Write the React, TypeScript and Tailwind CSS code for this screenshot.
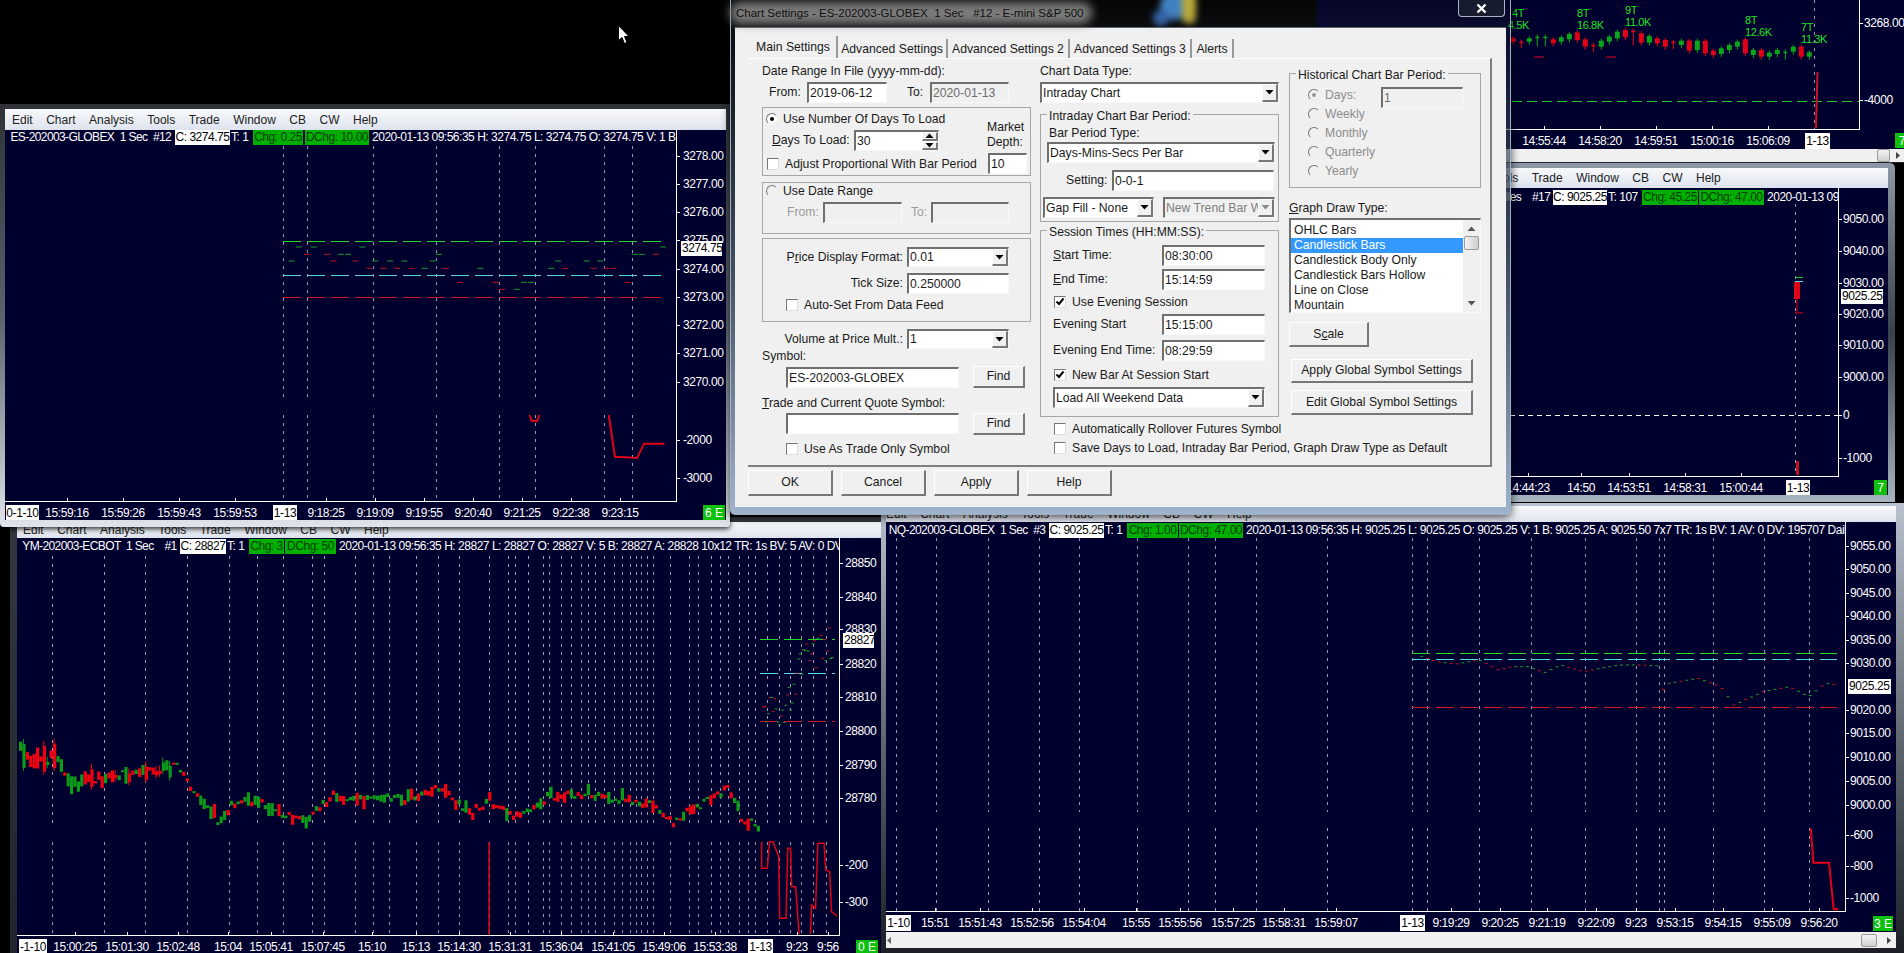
import React from "react";

const RED = "#e00018";
const CYAN = "#55d8e8";
const LINEG = "#22d822";
const LINER = "#d01828";
const DASH = "#9a9aae";

function rng(seed: number) {
  let s = seed;
  return () => {
    s = (s * 1664525 + 1013904223) % 4294967296;
    return s / 4294967296;
  };
}

function interp(pts: number[][], x: number) {
  for (let i = 0; i < pts.length - 1; i++) {
    if (x >= pts[i][0] && x <= pts[i + 1][0]) {
      const t = (x - pts[i][0]) / (pts[i + 1][0] - pts[i][0] || 1);
      return pts[i][1] + (pts[i + 1][1] - pts[i][1]) * t;
    }
  }
  return pts[pts.length - 1][1];
}

/* ---------- svg chart helpers ---------- */
function T({ x, y, fill = "#fff", anchor = "start", size = 12, children }: { x: number; y: number; fill?: string; anchor?: "start" | "middle"; size?: number; children: React.ReactNode }) {
  return (
    <text x={x} y={y + 4} fill={fill} textAnchor={anchor} fontSize={size} letterSpacing={-0.4}>
      {children}
    </text>
  );
}

function Axis({ left, top, right, bottom, prices, times, boxes, labelX, priceBox }: { left: number; top: number; right: number; bottom: number; prices: [string, number][]; times: [string, number][]; boxes: [string, number, number][]; labelX: number; priceBox?: [string, number, number] }) {
  return (
    <g>
      <line x1={right + 0.5} y1={top} x2={right + 0.5} y2={bottom + 1} stroke="#fff" />
      <line x1={left} y1={bottom + 0.5} x2={right + 1} y2={bottom + 0.5} stroke="#fff" />
      {prices.map(([p, y]) => (
        <g key={p}>
          <line x1={right} y1={y + 0.5} x2={right + 4} y2={y + 0.5} stroke="#fff" />
          <T x={labelX} y={y}>{p}</T>
        </g>
      ))}
      {priceBox && (
        <g>
          <rect x={labelX - 2} y={priceBox[1] - 7} width={priceBox[2]} height={15} fill="#fff" />
          <T x={labelX - 1} y={priceBox[1]} fill="#000">{priceBox[0]}</T>
        </g>
      )}
      {times.map(([t, x]) => (
        <g key={t + x}>
          <line x1={x + 0.5} y1={bottom - 3} x2={x + 0.5} y2={bottom} stroke="#fff" />
          <T x={x} y={bottom + 12} anchor="middle">{t}</T>
        </g>
      ))}
      {boxes.map(([t, x1, x2]) => (
        <g key={t}>
          <rect x={x1} y={bottom + 4} width={x2 - x1} height={16} fill="#fff" />
          <T x={(x1 + x2) / 2} y={bottom + 12} anchor="middle" fill="#000">{t}</T>
        </g>
      ))}
    </g>
  );
}

function VDash({ xs, y1, y2, gap }: { xs: number[]; y1: number; y2: number; gap?: [number, number] }) {
  return (
    <g stroke={DASH} strokeDasharray="3 5">
      {xs.map((x) => (
        <g key={x}>
          <line x1={x + 0.5} x2={x + 0.5} y1={y1} y2={gap ? gap[0] : y2} />
          {gap && <line x1={x + 0.5} x2={x + 0.5} y1={gap[1]} y2={y2} />}
        </g>
      ))}
    </g>
  );
}

function HLines({ x1, x2, lines }: { x1: number; x2: number; lines: [number, string][] }) {
  return (
    <g strokeDasharray="18 6">
      {lines.map(([y, c]) => (
        <line key={y} x1={x1} x2={x2} y1={y + 0.5} y2={y + 0.5} stroke={c} />
      ))}
    </g>
  );
}

function Chart({ x, y, w, h, children }: { x: number; y: number; w: number; h: number; children: React.ReactNode }) {
  return (
    <svg className="absolute inset-0" width={w} height={h} viewBox={`${x} ${y} ${w} ${h}`}>
      {children}
    </svg>
  );
}

/* ---------- window chrome ---------- */
const MENU = ["Edit", "Chart", "Analysis", "Tools", "Trade", "Window", "CB", "CW", "Help"];

function Menu({ cls }: { cls: string }) {
  return (
    <div className={`flex items-center gap-[13.5px] overflow-hidden bg-linear-to-b from-[#f8f9fb] to-[#dde3ee] text-[12px] text-[#222] whitespace-nowrap ${cls}`}>
      {MENU.map((m) => (
        <span key={m}>{m}</span>
      ))}
    </div>
  );
}

function Header({ cls, first, firstW, firstCls = "", c, cW, t, tW, chg, chgW, dchg, dchgW, gapCls, rest, w }: { cls: string; first: string; firstW: string; firstCls?: string; c: string; cW: string; t: string; tW: string; chg: string; chgW: string; dchg: string; dchgW: string; gapCls: string; rest: string; w: string }) {
  return (
    <div className={`absolute left-0 flex h-[15px] items-center overflow-hidden whitespace-pre text-[12px] leading-[15px] tracking-[-0.48px] text-white ${w} ${cls}`}>
      <span className={`shrink-0 overflow-hidden tracking-[-0.6px] ${firstW} ${firstCls}`}>{first}</span>
      <span className={`shrink-0 bg-white text-center text-black ${cW}`}>{c}</span>
      <span className={`shrink-0 pl-[1px] ${tW}`}>{t}</span>
      <span className={`shrink-0 bg-[#00b000] text-center text-[#053d05] ${chgW}`}>{chg}</span>
      <span className={`shrink-0 ${gapCls}`} />
      <span className={`shrink-0 bg-[#00b000] text-center text-[#053d05] ${dchgW}`}>{dchg}</span>
      <span className="shrink-0 pl-[3px]">{rest}</span>
    </div>
  );
}

function Badge({ cls, children }: { cls: string; children: React.ReactNode }) {
  return <div className={`absolute flex items-center justify-center bg-[#0cc00c] text-[12px] text-white ${cls}`}>{children}</div>;
}

function HScroll({ cls, thumb, arrowCls, leftArrow }: { cls: string; thumb: string; arrowCls: string; leftArrow?: boolean }) {
  return (
    <div className={`flex items-center bg-[#f0f0f0] ${cls}`}>
      {leftArrow && (
        <svg width="6" height="9" viewBox="0 0 6 9">
          <path d="M5 1 L1 4.5 L5 8 Z" fill="#666" />
        </svg>
      )}
      <div className="flex-1" />
      <div className={`h-[13px] rounded-[2px] border border-[#9a9a9a] bg-linear-to-b from-[#f4f4f4] to-[#cfcfcf] ${thumb}`} />
      <svg width="14" height="9" viewBox="0 0 14 9" className={arrowCls}>
        <path d="M6 1 L10 4.5 L6 8 Z" fill="#444" />
      </svg>
    </div>
  );
}

/* ---------- chart 1: ES ---------- */
function EsChart() {
  const g: number[][] = [[633,441],[665,441],[722,463],[738,463],[768,441],[618,483],[795,483],[827,483],[857,483],[917,483],[930,463],[900,505],[1018,505],[1168,505],[1183,483],[1243,483],[1272,483],[1345,463],[1360,463],[1405,441],[1110,547],[1125,547],[1095,568]];
  const r: number[][] = [[650,463],[693,463],[707,483],[753,483],[783,505],[812,505],[842,505],[872,505],[945,505],[975,547],[1050,547],[1063,568],[1198,505],[1258,505],[1285,505],[1300,505],[1330,547],[1390,463]];
  const zx = (v: number) => v / 2.119;
  const zy = (v: number) => 380 + v / 3;
  const dash = (a: number[], c: string, i: number) => {
    const x = zx(a[0]);
    const y = 100 + a[1] / 3;
    return <line key={c + i} x1={x - 3} x2={x + 3} y1={y} y2={y} stroke={c} />;
  };
  return (
    <Chart x={5} y={130} w={721} h={390}>
      <VDash xs={[283, 307, 373, 436, 499, 535, 604, 632]} y1={146} y2={501} gap={[402, 415]} />
      <HLines x1={283} x2={665} lines={[[241, LINEG], [275, CYAN], [297, LINER]]} />
      {g.map((a, i) => dash(a, "#1a9a2a", i))}
      {r.map((a, i) => dash(a, "#c01020", i))}
      <path d={`M${zx(1122)} ${zy(105)} L${zx(1127)} ${zy(123)} L${zx(1138)} ${zy(123)} L${zx(1143)} ${zy(105)}`} fill="none" stroke={RED} strokeWidth="2" />
      <path d={`M${zx(1290)} ${zy(105)} L${zx(1303)} ${zy(230)} L${zx(1318)} ${zy(231)} L${zx(1350)} ${zy(234)} L${zx(1365)} ${zy(191)} L${zx(1408)} ${zy(191)}`} fill="none" stroke={RED} strokeWidth="2" />
      <Axis
        left={5}
        top={130}
        right={676}
        bottom={501}
        labelX={683}
        prices={[["3278.00", 156], ["3277.00", 184], ["3276.00", 212], ["3275.00", 240], ["3274.00", 269], ["3273.00", 297], ["3272.00", 325], ["3271.00", 353], ["3270.00", 382], ["-2000", 440], ["-3000", 478]]}
        priceBox={["3274.75", 248, 41]}
        times={[["15:59:16", 67], ["15:59:26", 123], ["15:59:43", 179], ["15:59:53", 235], ["9:18:25", 326], ["9:19:09", 375], ["9:19:55", 424], ["9:20:40", 473], ["9:21:25", 522], ["9:22:38", 571], ["9:23:15", 620]]}
        boxes={[["0-1-10", 6, 39], ["1-13", 273, 297]]}
      />
    </Chart>
  );
}

/* ---------- chart 2: YM ---------- */
function YmChart() {
  const way = [[18,747],[28,763],[57,757],[68,788],[88,780],[142,772],[176,767],[193,790],[218,822],[238,797],[261,803],[301,823],[329,797],[397,800],[437,790],[471,813],[488,800],[516,817],[545,797],[590,793],[647,803],[670,823],[726,787],[743,823],[760,825]];
  const rnd = rng(11);
  const bars: React.ReactNode[] = [];
  for (let x = 19; x < 758; x += 3.4) {
    const y = interp(way, x) + (rnd() - 0.5) * 9;
    const big = x < 65 ? 13 : x < 175 ? 8 : rnd() > 0.6 ? 6 : 1.5;
    const h = 1 + rnd() * big;
    const c = rnd() > 0.5 ? "#f00010" : "#0c9a18";
    bars.push(<rect key={x} x={x} y={y - h} width={3.2} height={h * 2} fill={c} />);
    if (x < 175 && rnd() > 0.7) bars.push(<line key={x + "w"} x1={x + 1} x2={x + 1} y1={y - h - 5} y2={y + h + 3} stroke={c} />);
  }
  const rnd2 = rng(5);
  const recent = [[762,716],[785,705],[800,665],[832,640]];
  const marks: React.ReactNode[] = [];
  for (let x = 762; x < 832; x += 1.6) {
    const y = interp(recent, x) + (rnd2() - 0.5) * 34;
    marks.push(<line key={x} x1={x} x2={x + 3} y1={y} y2={y} stroke={rnd2() > 0.5 ? "#c01020" : "#1a9a2a"} />);
  }
  const zx = (v: number) => v / 1.762;
  const zy = (v: number) => 700 + v / 3;
  const path = (a: number[][]) => a.map((p, i) => `${i ? "L" : "M"}${zx(p[0])} ${zy(p[1])}`).join(" ");
  return (
    <Chart x={17} y={538} w={864} h={415}>
      <VDash xs={[52,104,145,187,229,257,283,312,324,355,373,389,416,438,459,489,508,515,528,543,549,561,571,581,588,595,604,614,622,630,636,641,647,653,670,689,698,711,720,728,739,748,755,767,779,790,801,813,826]} y1={556} y2={935} gap={[827, 842]} />
      <HLines x1={760} x2={835} lines={[[639, LINEG], [673, CYAN], [721, LINER]]} />
      {bars}
      {marks}
      <line x1={489} x2={489} y1={842} y2={935} stroke={RED} strokeWidth="1.5" />
      <path d={path([[1342,425],[1342,505],[1352,505],[1356,425],[1362,425],[1372,470],[1374,655],[1385,655],[1388,445],[1393,445],[1395,560],[1402,560],[1408,702]])} fill="none" stroke={RED} strokeWidth="1.5" />
      <path d={path([[1428,702],[1430,615],[1437,625],[1441,430],[1452,430],[1455,510],[1462,515],[1465,635],[1475,648]])} fill="none" stroke={RED} strokeWidth="1.5" />
      <Axis
        left={17}
        top={538}
        right={839}
        bottom={935}
        labelX={845}
        prices={[["28850", 563], ["28840", 597], ["28830", 629], ["28820", 664], ["28810", 697], ["28800", 731], ["28790", 765], ["28780", 798], ["-200", 865], ["-300", 902]]}
        priceBox={["28827", 640, 31]}
        times={[["15:00:25", 75], ["15:01:30", 127], ["15:02:48", 178], ["15:04", 228], ["15:05:41", 271], ["15:07:45", 323], ["15:10", 372], ["15:13", 416], ["15:14:30", 459], ["15:31:31", 510], ["15:36:04", 561], ["15:41:05", 613], ["15:49:06", 664], ["15:53:38", 715], ["9:23", 797], ["9:56", 828]]}
        boxes={[["-1-10", 19, 47], ["1-13", 748, 773]]}
      />
    </Chart>
  );
}

/* ---------- chart 3: NQ ---------- */
function NqChart() {
  const way = [[827,499],[850,515],[880,522],[915,510],[945,540],[965,530],[990,530],[1015,548],[1040,525],[1075,545],[1100,535],[1130,525],[1165,525],[1190,528]];
  const way2 = [[1197,598],[1205,580],[1250,565],[1285,590],[1305,645],[1350,605],[1390,590],[1420,620],[1445,580],[1465,585]];
  const rnd = rng(3);
  const marks: React.ReactNode[] = [];
  [way, way2].forEach((w, k) => {
    for (let z = w[0][0]; z < w[w.length - 1][0]; z += 9) {
      const x = 880 + z / 1.531;
      const y = 490 + interp(w, z) / 3;
      marks.push(<line key={k + "-" + z} x1={x} x2={x + 3} y1={y} y2={y} stroke={rnd() > 0.5 ? "#c01020" : "#1a9a2a"} />);
    }
  });
  const zx = (v: number) => 880 + v / 1.531;
  const zy = (v: number) => 720 + v / 3;
  return (
    <Chart x={886} y={522} w={1010} h={410}>
      <VDash xs={[896,936,988,1039,1079,1137,1188,1215,1256,1327,1412,1427,1479,1531,1585,1636,1659,1664,1713,1764,1809]} y1={538} y2={911} gap={[812, 828]} />
      <HLines x1={1412} x2={1837} lines={[[653, LINEG], [659, CYAN], [707, LINER]]} />
      {marks}
      <path d={`M${zx(1425)} ${zy(325)} L${zx(1429)} ${zy(428)} L${zx(1453)} ${zy(428)} L${zx(1460)} ${zy(568)} L${zx(1467)} ${zy(568)}`} fill="none" stroke={RED} strokeWidth="2" />
      <Axis
        left={886}
        top={522}
        right={1845}
        bottom={911}
        labelX={1850}
        prices={[["9055.00", 546], ["9050.00", 569], ["9045.00", 593], ["9040.00", 616], ["9035.00", 640], ["9030.00", 663], ["9020.00", 710], ["9015.00", 733], ["9010.00", 757], ["9005.00", 781], ["9000.00", 805], ["-600", 835], ["-800", 866], ["-1000", 898]]}
        priceBox={["9025.25", 686, 43]}
        times={[["15:51", 935], ["15:51:43", 980], ["15:52:56", 1032], ["15:54:04", 1084], ["15:55", 1136], ["15:55:56", 1180], ["15:57:25", 1233], ["15:58:31", 1284], ["15:59:07", 1336], ["9:19:29", 1451], ["9:20:25", 1500], ["9:21:19", 1547], ["9:22:09", 1596], ["9:23", 1636], ["9:53:15", 1675], ["9:54:15", 1723], ["9:55:09", 1772], ["9:56:20", 1819]]}
        boxes={[["1-10", 886, 911], ["1-13", 1400, 1425]]}
      />
    </Chart>
  );
}

/* ---------- chart 4: top right ---------- */
function TopChart() {
  const c: [number, number, number, string, boolean?][] = [
    [160,115,125,"r"],[184,125,135,"r",true],[208,115,125,"g"],[232,110,130,"g",true],[256,110,130,"g",true],[280,118,130,"r"],[304,112,125,"g"],[328,102,118,"g"],[352,97,120,"r"],[376,118,140,"r"],[400,135,148,"r",true],[424,122,140,"g"],[448,110,125,"g"],[472,95,115,"g"],[496,90,112,"r"],[520,92,128,"r",true],[544,100,128,"r"],[568,108,128,"g"],[592,115,130,"r"],[616,120,140,"r"],[640,125,138,"r",true],[664,122,135,"g"],[688,122,152,"r"],[712,122,150,"g"],[736,122,160,"r"],[760,152,165,"r"],[784,145,162,"g"],[808,135,150,"g"],[832,125,140,"g"],[856,118,160,"r"],[880,150,165,"g"],[904,150,170,"r"],[928,158,170,"g"],[952,150,162,"g"],[976,155,170,"g",true],[1000,140,155,"g"],[1024,140,170,"r"],[1048,157,170,"g"],
  ];
  const zx = (v: number) => 1460 + v / 3;
  const labels: [string, number, number][] = [["4T",1512,13],["4.5K",1508,25],["8T",1577,13],["16.8K",1577,25],["9T",1625,10],["11.0K",1625,22],["8T",1745,20],["12.6K",1745,32],["7T",1801,27],["11.3K",1801,39]];
  return (
    <Chart x={1317} y={0} w={587} h={149}>
      <line x1={1814.5} x2={1814.5} y1={0} y2={129} stroke={DASH} strokeDasharray="3 5" />
      <line x1={1317} x2={1859} y1={101.5} y2={101.5} stroke="#22c822" strokeDasharray="10 5" />
      {c.map(([x, a, b, col, thin]) => {
        const f = col === "r" ? RED : "#0aa61a";
        return (
          <g key={x}>
            <line x1={zx(x)} x2={zx(x)} y1={a / 3 - 2} y2={b / 3 + 3} stroke={f} />
            <rect x={zx(x) - (thin ? 2 : 2.5)} y={a / 3} width={thin ? 4 : 5} height={thin ? 1.5 : (b - a) / 3} fill={f} />
          </g>
        );
      })}
      <line x1={zx(222)} x2={zx(252)} y1={57} y2={57} stroke={RED} />
      <line x1={zx(438)} x2={zx(468)} y1={57} y2={57} stroke={RED} />
      {labels.map(([t, x, y]) => (
        <T key={t + x} x={x} y={y} fill="#22e022" size={11}>{t}</T>
      ))}
      <path d="M1817.5 72 L1817 90 L1816 128" stroke="#d01020" strokeWidth="2" fill="none" />
      <Axis
        left={1317}
        top={0}
        right={1859}
        bottom={129}
        labelX={1864}
        prices={[["3268.00", 23], ["-4000", 100]]}
        times={[["14:55:44", 1544], ["14:58:20", 1600], ["14:59:51", 1656], ["15:00:16", 1712], ["15:06:09", 1768]]}
        boxes={[["1-13", 1805, 1830]]}
      />
    </Chart>
  );
}

/* ---------- chart 5: right middle ---------- */
function MidChart() {
  return (
    <Chart x={1348} y={188} w={540} h={307}>
      <line x1={1795.5} x2={1795.5} y1={204} y2={476} stroke={DASH} strokeDasharray="3 5" />
      <line x1={1348} x2={1838} y1={415.5} y2={415.5} stroke="#fff" strokeDasharray="5 4" />
      <line x1={1795} x2={1803} y1={277.5} y2={277.5} stroke="#22c822" />
      <line x1={1795} x2={1803} y1={281.5} y2={281.5} stroke={CYAN} />
      <rect x={1794} y={282} width={6} height={17} fill={RED} />
      <line x1={1797} x2={1797} y1={298} y2={313} stroke={RED} />
      <line x1={1795} x2={1803} y1={313} y2={313} stroke={RED} />
      <rect x={1796} y={461} width={3} height={14} fill="#c01020" />
      <Axis
        left={1348}
        top={188}
        right={1838}
        bottom={476}
        labelX={1843}
        prices={[["9050.00", 219], ["9040.00", 251], ["9030.00", 283], ["9020.00", 314], ["9010.00", 345], ["9000.00", 377], ["0", 415], ["-1000", 458]]}
        priceBox={["9025.25", 296, 42]}
        times={[["14:44:23", 1528], ["14:50", 1581], ["14:53:51", 1629], ["14:58:31", 1685], ["15:00:44", 1741]]}
        boxes={[["1-13", 1786, 1810]]}
      />
    </Chart>
  );
}

/* ---------- dialog controls ---------- */
const SUNKEN = "border-t-2 border-l-2 border-t-[#6f6f6f] border-l-[#6f6f6f] border-b border-r border-b-[#f8f8f8] border-r-[#f8f8f8]";
const RAISED = "border-t border-l border-t-white border-l-white border-b-2 border-r-2 border-b-[#777] border-r-[#777] bg-[#f0f0f0]";

function Input({ cls, value = "", disabled }: { cls: string; value?: string; disabled?: boolean }) {
  return (
    <div className={`flex items-center overflow-hidden pl-[1px] ${SUNKEN} ${disabled ? "bg-[#f0f0f0] text-[#6d6d6d]" : "bg-white"} ${cls}`}>{value}</div>
  );
}

function Tri({ up, color = "#000" }: { up?: boolean; color?: string }) {
  return (
    <svg width="9" height="5" viewBox="0 0 9 5">
      <path d={up ? "M0.5 5 L4.5 0.5 L8.5 5 Z" : "M0.5 0 L8.5 0 L4.5 4.5 Z"} fill={color} />
    </svg>
  );
}

function Combo({ cls, value, disabled }: { cls: string; value: string; disabled?: boolean }) {
  return (
    <div className={`flex items-center ${SUNKEN} ${disabled ? "bg-[#f0f0f0] text-[#7d7d7d]" : "bg-white"} ${cls}`}>
      <span className="flex-1 overflow-hidden whitespace-nowrap pl-[1px]">{value}</span>
      <span className={`flex h-full w-[16px] shrink-0 items-center justify-center ${RAISED}`}>
        <Tri color={disabled ? "#8a8a8a" : "#000"} />
      </span>
    </div>
  );
}

function Btn({ cls, children }: { cls: string; children: React.ReactNode }) {
  return <div className={`flex items-center justify-center ${RAISED} ${cls}`}>{children}</div>;
}

function Check({ label, checked, cls = "" }: { label: React.ReactNode; checked?: boolean; cls?: string }) {
  return (
    <div className={`flex h-[16px] items-center whitespace-nowrap ${cls}`}>
      <span className="mr-[6px] flex h-[12px] w-[12px] shrink-0 items-center justify-center border-t border-l border-t-[#777] border-l-[#777] border-b border-r border-b-[#ddd] border-r-[#ddd] bg-white">
        {checked && (
          <svg width="10" height="10" viewBox="0 0 10 10">
            <path d="M1.5 4.5 L4 7 L8.5 1.5" fill="none" stroke="#000" strokeWidth="2" />
          </svg>
        )}
      </span>
      {label}
    </div>
  );
}

function Radio({ label, checked, disabled, grey, cls = "" }: { label: string; checked?: boolean; disabled?: boolean; grey?: boolean; cls?: string }) {
  return (
    <div className={`flex h-[16px] items-center whitespace-nowrap ${disabled ? "text-[#8d8d8d]" : ""} ${cls}`}>
      <span className={`mr-[5px] flex h-[12px] w-[12px] shrink-0 items-center justify-center rounded-full border border-t-[#777] border-l-[#777] border-b-[#eee] border-r-[#eee] ${disabled || grey ? "bg-[#f0f0f0]" : "bg-white"}`}>
        {checked && <span className={`h-[4px] w-[4px] rounded-full ${disabled ? "bg-[#999]" : "bg-black"}`} />}
      </span>
      {label}
    </div>
  );
}

function U({ children }: { children: string }) {
  return <span className="underline">{children}</span>;
}

function Group({ cls, legend, children }: { cls: string; legend?: string; children: React.ReactNode }) {
  return (
    <div className={`relative border border-[#a6a6a6] ${cls}`}>
      {legend && <span className="absolute top-[-6px] left-[6px] h-[15px] whitespace-nowrap bg-[#f0f0f0] px-[2px] leading-[15px]">{legend}</span>}
      {children}
    </div>
  );
}

function Lab({ cls = "", children }: { cls?: string; children: React.ReactNode }) {
  return <div className={`h-[14px] whitespace-nowrap leading-[14px] ${cls}`}>{children}</div>;
}

function Tab({ cls, active, children }: { cls: string; active?: boolean; children: string }) {
  return (
    <div className={`flex items-center justify-center whitespace-nowrap border-r-2 border-r-[#9a9a9a] ${active ? "mt-[-3px] h-[22px]" : "h-[19px] pt-[2px]"} ${cls}`}>{children}</div>
  );
}

function LeftCol() {
  return (
    <div className="mr-[9px] w-[269px] shrink-0">
      <Lab>Date Range In File (yyyy-mm-dd):</Lab>
      <div className="mt-[4px] flex h-[21px] items-center">
        <span className="ml-[7px] w-[38px]">From:</span>
        <Input cls="h-[21px] w-[80px]" value="2019-06-12" />
        <span className="ml-[20px] w-[23px]">To:</span>
        <Input cls="h-[21px] w-[79px]" disabled value="2020-01-13" />
      </div>
      <Group cls="mt-[4px] flex h-[69px]">
        <div className="w-[224px] shrink-0">
          <Radio cls="mt-[3px] ml-[3px]" checked label="Use Number Of Days To Load" />
          <div className="mt-[3px] flex h-[21px] items-center">
            <span className="ml-[9px] w-[82px]"><U>D</U>ays To Load:</span>
            <div className={`flex h-[21px] w-[85px] items-center justify-between bg-white pl-[1px] ${SUNKEN}`}>
              30
              <span className="flex h-full w-[16px] flex-col gap-[1px]">
                <span className={`flex flex-1 items-center justify-center ${RAISED}`}><Tri up /></span>
                <span className={`flex flex-1 items-center justify-center ${RAISED}`}><Tri /></span>
              </span>
            </div>
          </div>
          <Check cls="mt-[5px] ml-[4px]" label="Adjust Proportional With Bar Period" />
        </div>
        <div className="pt-[12px]">
          <Lab>Market</Lab>
          <Lab cls="mt-[1px]">Depth:</Lab>
          <Input cls="mt-[4px] ml-[1px] h-[21px] w-[39px]" value="10" />
        </div>
      </Group>
      <Group cls="mt-[6px] h-[52px]">
        <Radio cls="ml-[3px]" grey label="Use Date Range" />
        <div className="mt-[3px] flex h-[21px] items-center text-[#9a9a9a]">
          <span className="ml-[24px] w-[36px]">From:</span>
          <Input cls="h-[21px] w-[79px]" disabled />
          <span className="ml-[9px] w-[20px]">To:</span>
          <Input cls="h-[21px] w-[78px]" disabled />
        </div>
      </Group>
      <Group cls="mt-[4px] h-[84px]">
        <div className="mt-[8px] flex h-[20px] items-center">
          <span className="w-[140px] text-right">P<U>r</U>ice Display Format:</span>
          <Combo cls="ml-[4px] h-[20px] w-[102px]" value="0.01" />
        </div>
        <div className="mt-[6px] flex h-[21px] items-center">
          <span className="w-[140px] text-right">Tick Size:</span>
          <Input cls="ml-[4px] h-[21px] w-[102px]" value="0.250000" />
        </div>
        <Check cls="mt-[3px] ml-[23px]" label="Auto-Set From Data Feed" />
      </Group>
      <div className="mt-[7px] flex h-[20px] items-center">
        <span className="w-[141px] text-right">Volume at Price Mult.:</span>
        <Combo cls="ml-[4px] h-[20px] w-[102px]" value="1" />
      </div>
      <Lab>Symbol:</Lab>
      <div className="mt-[3px] flex h-[22px] items-start">
        <Input cls="mt-[1px] ml-[24px] h-[21px] w-[173px]" value="ES-202003-GLOBEX" />
        <Btn cls="ml-[14px] h-[22px] w-[52px]">Find</Btn>
      </div>
      <Lab cls="mt-[8px]"><U>T</U>rade and Current Quote Symbol:</Lab>
      <div className="mt-[3px] flex h-[22px] items-start">
        <Input cls="ml-[24px] h-[21px] w-[173px]" />
        <Btn cls="ml-[14px] h-[22px] w-[52px]">Find</Btn>
      </div>
      <Check cls="mt-[6px] ml-[24px]" label="Use As Trade Only Symbol" />
    </div>
  );
}

function SessionRow({ cls, label, value }: { cls: string; label: React.ReactNode; value: string }) {
  return (
    <div className={`flex h-[21px] items-center ${cls}`}>
      <span className="ml-[12px] w-[109px] whitespace-nowrap">{label}</span>
      <Input cls="h-[21px] w-[103px]" value={value} />
    </div>
  );
}

function MidCol() {
  return (
    <div className="mr-[10px] w-[239px] shrink-0">
      <Lab>Chart Data Type:</Lab>
      <Combo cls="mt-[4px] h-[21px] w-[239px]" value="Intraday Chart" />
      <Group cls="mt-[11px] h-[108px]" legend="Intraday Chart Bar Period:">
        <Lab cls="mt-[11px] ml-[8px]">Bar Period Type:</Lab>
        <Combo cls="mt-[2px] ml-[6px] h-[21px] w-[228px]" value="Days-Mins-Secs Per Bar" />
        <div className="mt-[7px] flex h-[21px] items-center">
          <span className="ml-[25px] w-[46px]">Setting:</span>
          <Input cls="h-[21px] w-[162px]" value="0-0-1" />
        </div>
        <div className="mt-[6px] flex">
          <Combo cls="ml-[2px] h-[21px] w-[111px]" value="Gap Fill - None" />
          <Combo cls="ml-[9px] h-[21px] w-[112px]" value="New Trend Bar Width" disabled />
        </div>
      </Group>
      <Group cls="mt-[8px] h-[187px]" legend="Session Times (HH:MM:SS):">
        <SessionRow cls="mt-[14px]" label={<><U>S</U>tart Time:</>} value="08:30:00" />
        <SessionRow cls="mt-[3px]" label={<><U>E</U>nd Time:</>} value="15:14:59" />
        <Check cls="mt-[4px] ml-[13px]" checked label="Use Evening Session" />
        <SessionRow cls="mt-[4px]" label="Evening Start" value="15:15:00" />
        <SessionRow cls="mt-[5px]" label="Evening End Time:" value="08:29:59" />
        <Check cls="mt-[6px] ml-[13px]" checked label="New Bar At Session Start" />
        <Combo cls="mt-[4px] ml-[12px] h-[21px] w-[212px]" value="Load All Weekend Data" />
      </Group>
      <Check cls="mt-[4px] ml-[14px]" label="Automatically Rollover Futures Symbol" />
      <Check cls="mt-[3px] ml-[14px]" label="Save Days to Load, Intraday Bar Period, Graph Draw Type as Default" />
    </div>
  );
}

function RightCol() {
  return (
    <div className="w-[192px] shrink-0">
      <Group cls="mt-[9px] flex h-[115px]" legend="Historical Chart Bar Period:">
        <div className="mt-[13px] ml-[18px] w-[73px] shrink-0">
          {["Days:", "Weekly", "Monthly", "Quarterly", "Yearly"].map((d, i) => (
            <Radio key={d} cls="mb-[3px]" disabled checked={i === 0} label={d} />
          ))}
        </div>
        <Input cls="mt-[13px] h-[21px] w-[82px]" disabled value="1" />
      </Group>
      <Lab cls="mt-[13px]"><U>G</U>raph Draw Type:</Lab>
      <div className={`mt-[3px] flex h-[95px] w-[192px] ${SUNKEN} bg-white`}>
        <div className="flex-1 overflow-hidden pt-[3px]">
          {["OHLC Bars", "Candlestick Bars", "Candlestick Body Only", "Candlestick Bars Hollow", "Line on Close", "Mountain"].map((r, i) => (
            <div key={r} className={`h-[15px] pl-[3px] leading-[15px] whitespace-nowrap ${i === 1 ? "bg-[#3399ff] text-white" : ""}`}>{r}</div>
          ))}
        </div>
        <div className="flex w-[17px] shrink-0 flex-col items-center bg-[#f0f0f0]">
          <span className="mt-[6px]"><Tri up color="#555" /></span>
          <span className="mt-[5px] h-[14px] w-[15px] rounded-[2px] border border-[#9a9a9a] bg-linear-to-r from-[#f4f4f4] to-[#cfcfcf]" />
          <span className="mt-auto mb-[6px]"><Tri color="#555" /></span>
        </div>
      </div>
      <Btn cls="mt-[9px] h-[25px] w-[80px]">S<U>c</U>ale</Btn>
      <Btn cls="mt-[12px] ml-[2px] h-[24px] w-[182px]">Apply Global Symbol Settings</Btn>
      <Btn cls="mt-[7px] ml-[2px] h-[25px] w-[182px]">Edit Global Symbol Settings</Btn>
    </div>
  );
}

function Dialog() {
  return (
    <div className="absolute top-0 left-[730px] z-60 h-[515px] w-[781px] rounded-b-[5px] border-x border-b border-[#9fb0c4] bg-linear-to-b from-[#1a1a1a]/20 via-[#3c4a5c] to-[#9fb4cc] shadow-[0_2px_8px_rgba(0,0,0,0.7)]">
      <div className="relative h-[27px] text-[11.5px] text-[#101010]">
        <div className="absolute top-[2px] left-[-1px] h-[22px] w-[362px] rounded-[10px] bg-[#7b7b7b] blur-[5px]" />
        <span className="absolute top-[5px] left-[5px] whitespace-pre leading-[16px]">Chart Settings - ES-202003-GLOBEX  1 Sec   #12 - E-mini S&amp;P 500</span>
        <div className="absolute top-0 right-[5px] flex h-[17px] w-[47px] items-center justify-center rounded-b-[4px] border-x border-b border-[#aab4c0] bg-[#1e2630]/70">
          <svg width="11" height="11" viewBox="0 0 11 11">
            <path d="M1.5 1.5 L9.5 9.5 M9.5 1.5 L1.5 9.5" stroke="#fff" strokeWidth="2.4" />
          </svg>
        </div>
      </div>
      <div className="mx-[4px] h-[480px] border-t border-[#5a6470] bg-[#f0f0f0] text-[12.2px] text-[#1a1a1a]">
        <div className="flex h-[30px] items-end pl-[15px]">
          <Tab cls="w-[88px]" active>Main Settings</Tab>
          <Tab cls="w-[110px]">Advanced Settings</Tab>
          <Tab cls="w-[122px]">Advanced Settings 2</Tab>
          <Tab cls="w-[122px]">Advanced Settings 3</Tab>
          <Tab cls="w-[42px]">Alerts</Tab>
        </div>
        <div className="ml-[13px] flex h-[409px] w-[744px] border-t border-r-2 border-b-2 border-t-white border-r-[#7f7f7f] border-b-[#7f7f7f] pt-[5px] pl-[14px]">
          <LeftCol />
          <MidCol />
          <RightCol />
        </div>
        <div className="mt-[3px] ml-[13px] flex gap-[8px]">
          {["OK", "Cancel", "Apply", "Help"].map((b) => (
            <Btn key={b} cls="h-[26px] w-[85px]">{b}</Btn>
          ))}
        </div>
      </div>
    </div>
  );
}

export default function App() {
  return (
    <div className="relative h-[953px] w-[1904px] overflow-hidden bg-black font-['Liberation_Sans',Arial,sans-serif]">
      {/* blurred desktop item seen through the glass title bar */}
      <div className="absolute top-0 left-[1150px] h-[27px] w-[52px] blur-[3px]">
        <div className="absolute top-[-8px] left-[10px] h-[28px] w-[28px] rounded-full bg-[#4a9cf0]" />
        <div className="absolute top-[-8px] left-[32px] h-[32px] w-[14px] rounded-full bg-[#e6d040]" />
        <div className="absolute top-[10px] left-[3px] h-[16px] w-[16px] rounded-full bg-[#3a78d0]" />
      </div>

      {/* YM window */}
      <div className="absolute top-[517px] left-[10px] z-10 flex h-[450px] w-[876px] flex-col bg-linear-to-b from-[#33383f] to-[#20242a] pt-[5px] pr-[5px] pl-[7px]">
        <Menu cls="h-[16px] shrink-0 pl-[6px]" />
        <div className="relative h-[415px] shrink-0 bg-[#00002e]">
          <YmChart />
          <Header
            cls="top-[1px]"
            w="w-[822px]"
            first="  YM-202003-ECBOT  1 Sec    #1"
            firstW="w-[163px]"
            c="C: 28827"
            cW="w-[46px]"
            t="T: 1"
            tW="w-[23px]"
            chg="Chg: 3"
            chgW="w-[35px]"
            gapCls="w-[1px]"
            dchg="DChg: 50"
            dchgW="w-[51px]"
            rest="2020-01-13 09:56:35 H: 28827 L: 28827 O: 28827 V: 5 B: 28827 A: 28828 10x12 TR: 1s BV: 5 AV: 0 DV"
          />
          <Badge cls="top-[402px] left-[839px] h-[13px] w-[22px]">0 E</Badge>
        </div>
      </div>

      {/* NQ window */}
      <div className="absolute top-[503px] left-[881px] z-20 flex h-[450px] w-[1023px] flex-col bg-linear-to-b from-[#b8c2ce] to-[#1c2026] pt-[3px] pr-[8px] pl-[5px]">
        <Menu cls="h-[16px] shrink-0" />
        <div className="relative h-[410px] shrink-0 bg-[#00002e]">
          <NqChart />
          <Header
            cls="top-[1px]"
            w="w-[959px]"
            first=" NQ-202003-GLOBEX  1 Sec  #3"
            firstW="w-[163px]"
            c="C: 9025.25"
            cW="w-[55px]"
            t="T: 1"
            tW="w-[23px]"
            chg="Chg: 1.00"
            chgW="w-[51px]"
            gapCls="w-[1px]"
            dchg="DChg: 47.00"
            dchgW="w-[64px]"
            rest="2020-01-13 09:56:35 H: 9025.25 L: 9025.25 O: 9025.25 V: 1 B: 9025.25 A: 9025.50 7x7 TR: 1s BV: 1 AV: 0 DV: 195707 Daily"
          />
          <Badge cls="top-[394px] left-[987px] h-[15px] w-[20px]">3 E</Badge>
        </div>
        <HScroll cls="h-[16px] shrink-0 pr-[1px]" thumb="w-[16px]" arrowCls="ml-[4px]" leftArrow />
      </div>

      {/* top right window */}
      <div className="absolute top-0 left-[1317px] z-30 flex h-[163px] w-[587px] flex-col bg-[#20242a]">
        <div className="relative h-[149px] shrink-0 bg-[#00002e]">
          <TopChart />
          <Badge cls="top-[133px] left-[578px] h-[15px] w-[14px]">7</Badge>
        </div>
        <HScroll cls="h-[13px] shrink-0" thumb="w-[13px]" arrowCls="ml-0" />
      </div>

      {/* right middle window */}
      <div className="absolute top-[163px] left-[1343px] z-40 flex h-[339px] w-[552px] flex-col rounded-t-[5px] bg-linear-to-b from-[#8d98a6] via-[#39424c] to-[#a8b4c0] pt-[5px] pr-[7px] pl-[5px]">
        <Menu cls="h-[20px] shrink-0 pl-[7px]" />
        <div className="relative h-[307px] shrink-0 bg-[#00002e]">
          <MidChart />
          <Header
            cls="top-[2px]"
            w="w-[490px]"
            first="ES-202003-GLOBEX  1 Min  Candles    #17 "
            firstW="w-[205px]"
            firstCls="flex justify-end"
            c="C: 9025.25"
            cW="w-[54px]"
            t="T: 107"
            tW="w-[35px]"
            chg="Chg: 45.25"
            chgW="w-[56px]"
            gapCls="w-[1px]"
            dchg="DChg: 47.00"
            dchgW="w-[65px]"
            rest="2020-01-13 09:56:35"
          />
          <Badge cls="top-[292px] left-[526px] h-[15px] w-[13px]">7</Badge>
        </div>
      </div>

      {/* ES window */}
      <div className="absolute top-[104px] left-0 z-50 flex h-[423px] w-[730px] flex-col rounded-b-[4px] bg-linear-to-b from-[#2e3238] via-[#59636e] to-[#dfe5ea] pt-[5px] pr-[4px] pl-[5px] shadow-[0_2px_5px_rgba(0,0,0,0.8)]">
        <Menu cls="h-[21px] shrink-0 pl-[7px]" />
        <div className="relative h-[390px] shrink-0 bg-[#00002e]">
          <EsChart />
          <Header
            cls="top-0"
            w="w-[671px]"
            first="  ES-202003-GLOBEX  1 Sec  #12"
            firstW="w-[170px]"
            c="C: 3274.75"
            cW="w-[55px]"
            t="T: 1"
            tW="w-[23px]"
            chg="Chg: 0.25"
            chgW="w-[50px]"
            gapCls="w-[2px]"
            dchg="DChg: 10.00"
            dchgW="w-[64px]"
            rest="2020-01-13 09:56:35 H: 3274.75 L: 3274.75 O: 3274.75 V: 1 B"
          />
          <Badge cls="top-[375px] left-[698px] h-[15px] w-[22px]">6 E</Badge>
        </div>
      </div>

      <Dialog />

      {/* mouse pointer */}
      <svg className="absolute top-[25px] left-[618px] z-70" width="13" height="20" viewBox="0 0 13 20">
        <path d="M0.5 0.5 L0.5 15.5 L4 12.5 L6.5 18.5 L9 17.5 L6.5 11.5 L11 11.5 Z" fill="#fff" stroke="#000" />
      </svg>
    </div>
  );
}
